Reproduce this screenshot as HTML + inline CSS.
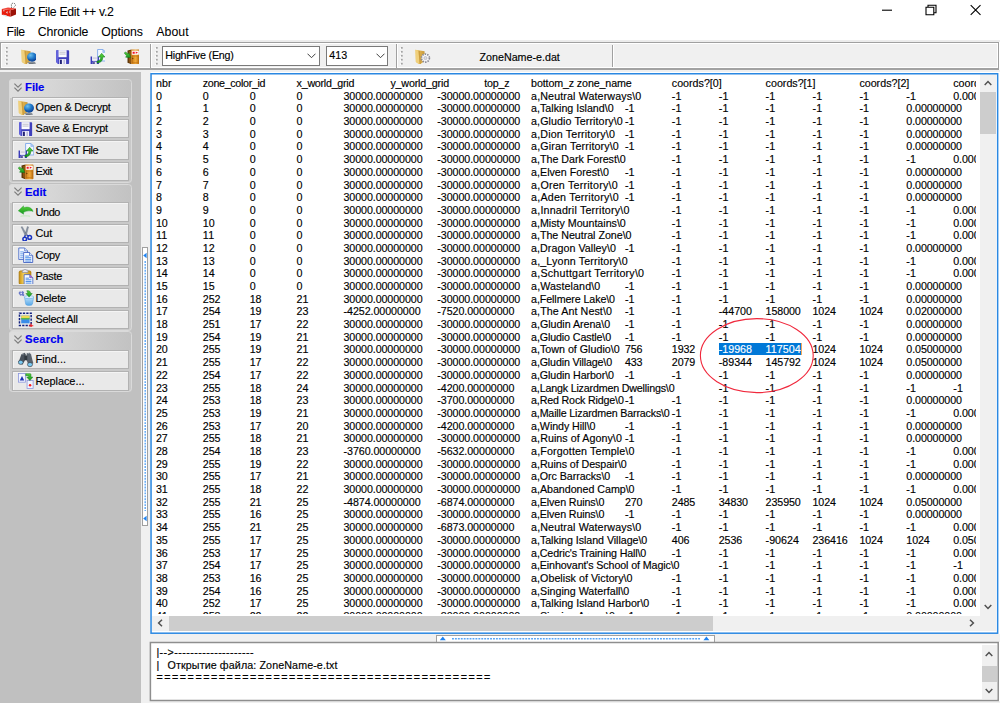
<!DOCTYPE html>
<html lang="en"><head><meta charset="utf-8"><title>L2 File Edit ++ v.2</title>
<style>
*{box-sizing:border-box;margin:0;padding:0}
html,body{width:1000px;height:703px;overflow:hidden;background:#fff}
body{position:relative;font-family:"Liberation Sans","DejaVu Sans",sans-serif;font-size:10.7px;color:#000;-webkit-text-stroke-width:.15px}
div,span,i,b,svg{position:absolute}
i{font-style:normal;white-space:pre;top:0}
/* title + menu */
#title{-webkit-text-stroke-width:.050px;left:21.900px;top:1.900px;font-size:12.300px;line-height:20px;white-space:pre}
.m{-webkit-text-stroke-width:.050px;top:22px;font-size:12.300px;line-height:20px;white-space:pre}
/* toolbar */
#tb{left:0;top:42px;width:998.6px;height:28.200px;background:#f0f0f0;border-top:1px solid #a0a0a0;border-left:1px solid #a0a0a0;border-bottom:2px solid #a2a2a2;border-right:1px solid #a0a0a0;box-shadow:inset 1px 1px 0 #fff,inset -1px -1px 0 #fff}
#tbtop{left:0;top:40px;width:1000px;height:2px;background:#ececec}
#under{left:0;top:70px;width:1000px;height:2px;background:#f0f0f0}
.sep{top:44px;width:2px;height:23.500px;border-left:1px solid #a0a0a0;border-right:1px solid #fff}
.combo{top:46.300px;height:19.500px;background:#fff;border:1px solid #7a7a7a;line-height:17.600px;padding-left:2.100px;font-size:10.700px;white-space:pre}
.combo svg{top:6px;width:9px;height:6px}
.ti{top:48.500px;width:15.600px;height:15.600px}
/* sidebar */
#side{left:0;top:71.800px;width:140.600px;height:632px;background:#c0c0c0}
#strip{left:140.600px;top:71.800px;width:10px;height:632px;background:#f0f0f0}
.p{left:9.100px;width:122.800px;background:#c9c9c9;border-radius:3.500px;overflow:hidden}
.p::after{content:"";position:absolute;left:0;top:0;right:0;bottom:0;border:1px solid #dadada;border-radius:3.500px}
.ph{left:0;top:0;width:100%;height:19px;background:linear-gradient(90deg,#dedede 0,#d6d6d6 35%,#c2c2c2 100%)}
.ph b{left:16px;top:1px;font-size:11.300px;line-height:14px;color:#0000f0;font-weight:bold}
.cv{left:4.800px;top:3.600px;width:8px;height:9.200px}
.b{left:2.900px;width:117.300px;height:19.500px;background:#e9e9e9;border:1px solid #b2b2b2;box-shadow:inset 1px 1px 0 #f4f4f4}
.b span{left:22.600px;top:1.700px;line-height:14px;white-space:pre;font-size:10.900px}
.ic{left:5.100px;top:1.300px;width:15.600px;height:15.600px}
/* text area */
#ta{left:151px;top:73.700px;width:846.600px;height:559.500px;background:#fff}
#tc{left:152px;top:74.500px;width:824px;height:539.800px;overflow:hidden;line-height:12.690px}
.r{left:0;width:900px;height:12.690px}
#sel{left:566.800px;width:82px;height:12.600px;background:#0078d7}
.sb{background:#f0f0f0}
.th{background:#cdcdcd}
.ar{width:8px;height:8px}
#log{left:150.400px;top:642.500px;width:847.800px;height:58px;background:#fff}
#lt{left:156.400px;top:646px;line-height:12.900px;white-space:pre}
#lt i{position:absolute}
#bot{left:140.600px;top:700.800px;width:860px;height:3px;background:#f0f0f0}
.hd{background:#fff;border:1px solid #a0a0a0}
</style></head><body>

<svg width="0" height="0" style="position:absolute"><defs>
<radialGradient id="gb" cx=".35" cy=".3" r=".8"><stop offset="0" stop-color="#6cc0ee"/><stop offset=".5" stop-color="#2078c8"/><stop offset="1" stop-color="#0c3c96"/></radialGradient>
<linearGradient id="gf" x1="0" x2="1"><stop offset="0" stop-color="#ecc868"/><stop offset=".45" stop-color="#e0b452"/><stop offset="1" stop-color="#c89838"/></linearGradient>
<linearGradient id="gd" x1="0" x2="1"><stop offset="0" stop-color="#c87814"/><stop offset=".55" stop-color="#f0aa3c"/><stop offset="1" stop-color="#b86a0c"/></linearGradient>
<linearGradient id="gg" x1="0" y1="0" x2="0" y2="1"><stop offset="0" stop-color="#5ad23c"/><stop offset="1" stop-color="#14961e"/></linearGradient>
<linearGradient id="gp" x1="0" x2="1"><stop offset="0" stop-color="#c8920c"/><stop offset=".4" stop-color="#f6d264"/><stop offset="1" stop-color="#c8920c"/></linearGradient>
<linearGradient id="gl" x1="0" y1="0" x2="0" y2="1"><stop offset="0" stop-color="#bfe2fa"/><stop offset="1" stop-color="#58a8e8"/></linearGradient>
</defs></svg>
<svg style="left:0;top:0;width:20px;height:20px" viewBox="0 0 20 20"><path d="M1.800 9l8.700 1.200v6.500l-8.700-1.900z" fill="#e81c0c"/><path d="M10.500 10.200l5.500-1.600v6l-5.500 2.100z" fill="#9c1208"/><path d="M1.800 9l6.200-1.400 8 1-5.500 1.600z" fill="#f2463a"/><path d="M3 10.200h1.600v1h-1.600zM9 11.600h1.300v1h-1.300zM7.600 11l-1.800 1.400 1.800 1.400z" fill="#e4c4c4"/><path d="M2.400 14.500l3.600 .8 3 1.800-3.600-.4z" fill="#dcecf0"/><path d="M11.500 8c.5-2-1-3.500.5-4.500s3 0 3.500 1.200-1.500 1.500-2 3.300" fill="none" stroke="#666" stroke-width=".9" stroke-dasharray="1.300 .9"/></svg>
<div id="title" style="letter-spacing:-0.35px">L2 File Edit ++ v.2</div>
<div class="m" style="left:6.6px;letter-spacing:-0.45px">File</div>
<div class="m" style="left:37.8px;letter-spacing:-0.16px">Chronicle</div>
<div class="m" style="left:101.3px;letter-spacing:-0.14px">Options</div>
<div class="m" style="left:156.3px;letter-spacing:0.05px">About</div>
<svg style="left:876px;top:0;width:112px;height:20px" viewBox="0 0 112 20"><path d="M6 10.200h10" stroke="#000" stroke-width="1.100"/><path d="M50 7.200h7.800v7.500h-7.800zM52 7.200v-2h8v7.500h-2.200" fill="none" stroke="#000" stroke-width="1.100"/><path d="M94.700 5.200l9.800 9.600M104.500 5.200l-9.800 9.600" stroke="#000" stroke-width="1.100"/></svg>
<div id="tbtop"></div><div id="tb"></div><div id="under"></div>
<svg style="left:4.9px;top:46.800px;width:3px;height:18px" viewBox="0 0 3 18"><rect x=".1" y="0.90" width="1.500" height="1.500" fill="#fff"/><rect x="1" y="0.00" width="1.700" height="1.700" fill="#a2a2a2"/><rect x=".1" y="4.86" width="1.500" height="1.500" fill="#fff"/><rect x="1" y="3.96" width="1.700" height="1.700" fill="#a2a2a2"/><rect x=".1" y="8.82" width="1.500" height="1.500" fill="#fff"/><rect x="1" y="7.92" width="1.700" height="1.700" fill="#a2a2a2"/><rect x=".1" y="12.78" width="1.500" height="1.500" fill="#fff"/><rect x="1" y="11.88" width="1.700" height="1.700" fill="#a2a2a2"/><rect x=".1" y="16.74" width="1.500" height="1.500" fill="#fff"/><rect x="1" y="15.84" width="1.700" height="1.700" fill="#a2a2a2"/></svg>
<svg class="ti" style="left:20.9px" viewBox="0 0 16 16"><path d="M.4 .8l9.400 1.400v10l-5 3.800-3.900-2.700z" fill="url(#gf)"/><path d="M.4 .8l3.200 .9 1.200 14.300-3.900-2.700z" fill="#f0d07c"/><path d="M3.600 1.700l1.200 14.300 1.400-1-1.100-13z" fill="#cc9e40"/><path d="M6.400 13.400l2 2 5.600.500 1.400-1.300-1.600-1.800z" fill="#8a9098"/><path d="M8 15.200h4.200l1.600 1" stroke="#586068" stroke-width=".8" fill="none"/><ellipse cx="11.300" cy="8.300" rx="5.100" ry="4.700" fill="url(#gb)"/><path d="M7.200 10.300c2.500 1.500 6 1.500 8.300 0" stroke="#0c3484" stroke-width=".7" fill="none" opacity=".6"/></svg>
<svg class="ti" style="left:55.3px" viewBox="0 0 16 16"><path d="M2 1.200h11.600q.9 0 .9.900v12.400q0 .9-.9.900h-10.400l-2.100-2.100v-11.200q0-.9.900-.9z" fill="#4040bc"/><path d="M2 1.200h1.400v14.200h-.2l-2.100-2.100v-11.200q0-.9.900-.9z" fill="#6464dc"/><rect x="3.600" y="1.200" width="8.300" height="7.200" fill="#fcfcff"/><path d="M4.600 3.300h6.300M4.600 5.200h6.300" stroke="#b4b4c4" stroke-width=".9"/><rect x="4.400" y="10.300" width="7" height="5.100" fill="#f0f0fc"/><rect x="5.200" y="11" width="1.800" height="4.400" fill="#14146c"/><rect x="8.800" y="11" width="1.200" height="4.400" fill="#a8a8d0"/></svg>
<svg class="ti" style="left:89.8px" viewBox="0 0 16 16"><path d="M7.800 .5h5.400l3 3v8.800h-8.400z" fill="#f4f8ff" stroke="#7aa6ea" stroke-width=".9"/><path d="M13.200 .5v3h3z" fill="#b8d2f6" stroke="#7aa6ea" stroke-width=".6"/><path d="M.6 7.600h1.600v8.600h-.4l-1.200-1.200zM7.600 7.600h1.600v8.600h-1.600zM.6 12h8.600v4.200h-8l-.6-.6z" fill="#3a3ab8"/><rect x="2.200" y="7.600" width="5.400" height="4.400" fill="#eeeef8"/><path d="M2.800 9.300h4.200" stroke="#b4b4c4" stroke-width=".8"/><rect x="2.800" y="13" width="4.200" height="3.200" fill="#e4e4f6"/><rect x="3.400" y="13.400" width="1.300" height="2.800" fill="#14146c"/><path d="M12 4.400l3.400 3.900h-2.200c0 3.700-2.300 6.100-6 6.100v-2c2.400 0 3.800-1.500 3.800-4.100h-2.300z" fill="url(#gg)" stroke="#0c7416" stroke-width=".5"/></svg>
<svg class="ti" style="left:123.8px" viewBox="0 0 16 16"><path d="M3.600 1.500l4-1.100v15.200l-4-1.600z" fill="#5e3608"/><path d="M5 2.300l2.600-.8v13.200l-2.600-1z" fill="#8c5210"/><rect x="7.400" y=".4" width="8.400" height="15.200" rx=".7" fill="url(#gd)"/><rect x="8.600" y="7.200" width="6" height="7" fill="none" stroke="#b86c10" stroke-width=".6"/><rect x="8" y="1.700" width="7.200" height="4.200" fill="#fff"/><path d="M8.800 2.700h2.200v2.200h-2.200zM12 2.600l2.400 1.200-2.400 1.200z" fill="#f01424"/><circle cx="9" cy="9.800" r=".7" fill="#6a3c06"/><path d="M.2 4l1.600-1 2.300 2.300 1-1.500 1.700 5-5.200-.4 1.100-1.400z" fill="url(#gg)" stroke="#0c7416" stroke-width=".5"/></svg>
<div class="sep" style="left:150.200px"></div>
<svg style="left:154.6px;top:46.800px;width:3px;height:18px" viewBox="0 0 3 18"><rect x=".1" y="0.90" width="1.500" height="1.500" fill="#fff"/><rect x="1" y="0.00" width="1.700" height="1.700" fill="#a2a2a2"/><rect x=".1" y="4.86" width="1.500" height="1.500" fill="#fff"/><rect x="1" y="3.96" width="1.700" height="1.700" fill="#a2a2a2"/><rect x=".1" y="8.82" width="1.500" height="1.500" fill="#fff"/><rect x="1" y="7.92" width="1.700" height="1.700" fill="#a2a2a2"/><rect x=".1" y="12.78" width="1.500" height="1.500" fill="#fff"/><rect x="1" y="11.88" width="1.700" height="1.700" fill="#a2a2a2"/><rect x=".1" y="16.74" width="1.500" height="1.500" fill="#fff"/><rect x="1" y="15.84" width="1.700" height="1.700" fill="#a2a2a2"/></svg>
<div class="combo" style="left:162.100px;width:157.800px;letter-spacing:-0.20px">HighFive (Eng)<svg viewBox="0 0 9 6" style="left:143.5px"><path d="M.5 .7l4 4 4-4" fill="none" stroke="#404040" stroke-width="1"/></svg></div>
<div class="combo" style="left:326.200px;width:62.100px">413<svg viewBox="0 0 9 6" style="left:48.5px"><path d="M.5 .7l4 4 4-4" fill="none" stroke="#404040" stroke-width="1"/></svg></div>
<div class="sep" style="left:396px"></div>
<svg style="left:399.7px;top:46.800px;width:3px;height:18px" viewBox="0 0 3 18"><rect x=".1" y="0.90" width="1.500" height="1.500" fill="#fff"/><rect x="1" y="0.00" width="1.700" height="1.700" fill="#a2a2a2"/><rect x=".1" y="4.86" width="1.500" height="1.500" fill="#fff"/><rect x="1" y="3.96" width="1.700" height="1.700" fill="#a2a2a2"/><rect x=".1" y="8.82" width="1.500" height="1.500" fill="#fff"/><rect x="1" y="7.92" width="1.700" height="1.700" fill="#a2a2a2"/><rect x=".1" y="12.78" width="1.500" height="1.500" fill="#fff"/><rect x="1" y="11.88" width="1.700" height="1.700" fill="#a2a2a2"/><rect x=".1" y="16.74" width="1.500" height="1.500" fill="#fff"/><rect x="1" y="15.84" width="1.700" height="1.700" fill="#a2a2a2"/></svg>
<svg class="ti" style="left:415.3px" viewBox="0 0 16 16"><path d="M.4 .8l9.400 1.400v10l-5 3.800-3.900-2.700z" fill="url(#gf)"/><path d="M.4 .8l3.200 .9 1.200 14.300-3.900-2.700z" fill="#f0d07c"/><path d="M3.600 1.700l1.200 14.300 1.400-1-1.100-13z" fill="#cc9e40"/><circle cx="10.700" cy="9.300" r="4.100" fill="#f6f6f8" stroke="#8a8a94" stroke-width="1.700" stroke-dasharray="1.500 1.080"/><circle cx="10.700" cy="9.300" r="1.600" fill="#dcdce2" stroke="#9a9aa4" stroke-width=".500"/></svg>
<div style="left:479.600px;top:49.500px;line-height:14px;white-space:pre;font-size:10.700px;letter-spacing:0.00px">ZoneName-e.dat</div>
<div class="sep" style="left:611.500px;top:45px;height:22px"></div>
<div id="side"></div><div id="strip"></div>
<div class="p" style="top:79.0px;height:104.2px"><div class="ph"><svg class="cv" viewBox="0 0 8 9"><path d="M.4 .6l3.600 3.500 3.600-3.500M.4 4.600l3.600 3.500 3.600-3.500" fill="none" stroke="#7c7c7c" stroke-width="1.150"/></svg><b style="letter-spacing:-0.07px">File</b></div><div class="b" style="top:18.4px"><svg class="ic" viewBox="0 0 16 16"><path d="M.4 .8l9.400 1.400v10l-5 3.800-3.900-2.700z" fill="url(#gf)"/><path d="M.4 .8l3.200 .9 1.200 14.300-3.900-2.700z" fill="#f0d07c"/><path d="M3.600 1.700l1.200 14.300 1.400-1-1.100-13z" fill="#cc9e40"/><path d="M6.400 13.400l2 2 5.600.500 1.400-1.300-1.600-1.800z" fill="#8a9098"/><path d="M8 15.200h4.200l1.600 1" stroke="#586068" stroke-width=".8" fill="none"/><ellipse cx="11.300" cy="8.300" rx="5.100" ry="4.700" fill="url(#gb)"/><path d="M7.200 10.300c2.500 1.500 6 1.500 8.300 0" stroke="#0c3484" stroke-width=".7" fill="none" opacity=".6"/></svg><span style="letter-spacing:-0.17px">Open &amp; Decrypt</span></div><div class="b" style="top:39.8px"><svg class="ic" viewBox="0 0 16 16"><path d="M2 1.200h11.600q.9 0 .9.900v12.400q0 .9-.9.900h-10.400l-2.100-2.100v-11.200q0-.9.900-.9z" fill="#4040bc"/><path d="M2 1.200h1.400v14.200h-.2l-2.100-2.100v-11.200q0-.9.900-.9z" fill="#6464dc"/><rect x="3.600" y="1.200" width="8.300" height="7.200" fill="#fcfcff"/><path d="M4.600 3.300h6.300M4.600 5.200h6.300" stroke="#b4b4c4" stroke-width=".9"/><rect x="4.400" y="10.300" width="7" height="5.100" fill="#f0f0fc"/><rect x="5.200" y="11" width="1.800" height="4.400" fill="#14146c"/><rect x="8.800" y="11" width="1.200" height="4.400" fill="#a8a8d0"/></svg><span style="letter-spacing:-0.20px">Save &amp; Encrypt</span></div><div class="b" style="top:61.3px"><svg class="ic" viewBox="0 0 16 16"><path d="M7.800 .5h5.400l3 3v8.800h-8.400z" fill="#f4f8ff" stroke="#7aa6ea" stroke-width=".9"/><path d="M13.200 .5v3h3z" fill="#b8d2f6" stroke="#7aa6ea" stroke-width=".6"/><path d="M.6 7.600h1.600v8.600h-.4l-1.200-1.200zM7.600 7.600h1.600v8.600h-1.600zM.6 12h8.600v4.200h-8l-.6-.6z" fill="#3a3ab8"/><rect x="2.200" y="7.600" width="5.400" height="4.400" fill="#eeeef8"/><path d="M2.800 9.300h4.200" stroke="#b4b4c4" stroke-width=".8"/><rect x="2.800" y="13" width="4.200" height="3.200" fill="#e4e4f6"/><rect x="3.400" y="13.400" width="1.300" height="2.800" fill="#14146c"/><path d="M12 4.400l3.400 3.900h-2.200c0 3.700-2.300 6.100-6 6.100v-2c2.400 0 3.800-1.500 3.800-4.100h-2.300z" fill="url(#gg)" stroke="#0c7416" stroke-width=".5"/></svg><span style="letter-spacing:-0.47px">Save TXT File</span></div><div class="b" style="top:82.8px"><svg class="ic" viewBox="0 0 16 16"><path d="M3.600 1.500l4-1.100v15.200l-4-1.600z" fill="#5e3608"/><path d="M5 2.300l2.600-.8v13.200l-2.600-1z" fill="#8c5210"/><rect x="7.400" y=".4" width="8.400" height="15.200" rx=".7" fill="url(#gd)"/><rect x="8.600" y="7.200" width="6" height="7" fill="none" stroke="#b86c10" stroke-width=".6"/><rect x="8" y="1.700" width="7.200" height="4.200" fill="#fff"/><path d="M8.800 2.700h2.200v2.200h-2.200zM12 2.600l2.400 1.200-2.400 1.200z" fill="#f01424"/><circle cx="9" cy="9.800" r=".7" fill="#6a3c06"/><path d="M.2 4l1.600-1 2.300 2.300 1-1.500 1.700 5-5.200-.4 1.100-1.400z" fill="url(#gg)" stroke="#0c7416" stroke-width=".5"/></svg><span style="letter-spacing:-0.39px">Exit</span></div></div><div class="p" style="top:183.8px;height:147.0px"><div class="ph"><svg class="cv" viewBox="0 0 8 9"><path d="M.4 .6l3.600 3.500 3.600-3.500M.4 4.600l3.600 3.500 3.600-3.500" fill="none" stroke="#7c7c7c" stroke-width="1.150"/></svg><b style="letter-spacing:-0.06px">Edit</b></div><div class="b" style="top:18.4px"><svg class="ic" viewBox="0 0 16 16"><path d="M.3 7l5.400-5.100v2c3.300-1.500 8.300-.9 9.800 3.700-2.500-1-6.500-.6-9.800.9v2z" fill="url(#gg)" stroke="#1a9a24" stroke-width=".4"/><path d="M2.500 12.600c3-.6 7-.6 10 0" stroke="#b4e6ac" stroke-width="1" fill="none" opacity=".8"/></svg><span style="letter-spacing:-0.41px">Undo</span></div><div class="b" style="top:39.8px"><svg class="ic" viewBox="0 0 16 16"><path d="M3.200 1l1.200-.3 4.600 8.400-1.200 1.300zM9.600 .6l1.200.4-2.400 9.300-1.500-.8z" fill="#8e98a8" stroke="#5e6878" stroke-width=".4"/><circle cx="6.900" cy="13.400" r="1.900" fill="none" stroke="#1a34c0" stroke-width="1.500"/><circle cx="12" cy="11.700" r="1.900" fill="none" stroke="#1a34c0" stroke-width="1.500"/><path d="M7.400 9.500l-.8 2.200M9.300 9.300l1.600 1" stroke="#1a34c0" stroke-width="1.300"/></svg><span style="letter-spacing:-0.12px">Cut</span></div><div class="b" style="top:61.3px"><svg class="ic" viewBox="0 0 16 16"><path d="M.8 1h6l3 3v8.800h-9z" fill="#f4f8ff" stroke="#4a6cc8" stroke-width=".9"/><path d="M6.800 1v3h3" fill="#d4e2fa" stroke="#4a6cc8" stroke-width=".7"/><path d="M2.300 5h3.500M2.300 7h3M2.300 9h3M2.300 11h3" stroke="#5a96e8" stroke-width=".9"/><path d="M5.800 5.600h6l3.300 3.300v7h-9.300z" fill="#f8fbff" stroke="#3a5cc0" stroke-width=".9"/><path d="M11.800 5.600v3.300h3.300" fill="#d4e2fa" stroke="#3a5cc0" stroke-width=".7"/><path d="M7.400 9.300h3.800M7.400 11h6.200M7.400 12.700h6.200M7.400 14.400h6.200" stroke="#4a8ce8" stroke-width="1"/></svg><span style="letter-spacing:-0.26px">Copy</span></div><div class="b" style="top:82.8px"><svg class="ic" viewBox="0 0 16 16"><rect x="1.200" y="2" width="12" height="13.700" rx="1.300" fill="url(#gp)" stroke="#a87408" stroke-width=".8"/><path d="M4.400 3.600v-1.800q0-.6.600-.6h1l.5-.9h1.600l.5.900h1q.6 0 .6.600v1.800z" fill="#e4e4ec" stroke="#80808c" stroke-width=".6"/><path d="M6.300 5.800h5.700l3.200 3.200v7h-8.900z" fill="#f8fbff" stroke="#3a5cc0" stroke-width=".8"/><path d="M12 5.800v3.200h3.200" fill="#c060d0" stroke="#3a5cc0" stroke-width=".6"/><path d="M7.800 9.400h3.400M7.800 11.100h6M7.800 12.800h6M7.800 14.500h6" stroke="#4a8ce8" stroke-width="1"/></svg><span style="letter-spacing:-0.30px">Paste</span></div><div class="b" style="top:104.3px"><svg class="ic" viewBox="0 0 16 16"><path d="M6.600 7.200h9.500l-1.300 7.300q-.3 1.300-3.500 1.300t-3.400-1.300z" fill="url(#gl)" stroke="#4c9ce0" stroke-width=".5"/><ellipse cx="11.300" cy="7.300" rx="4.800" ry="1.600" fill="#d8eefc" stroke="#4c9ce0" stroke-width=".5"/><path d="M9 .8c2.400-.6 4 .6 3.900 2.800h1.700l-3.200 3.700-3.300-3.700h1.900c.1-1-.3-1.600-1-2.800z" fill="url(#gg)" stroke="#0f7a18" stroke-width=".5"/><path d="M.5 3l1.400-1.800 1.500.9 1.300-1 1.500 1.200-.6 1.800 1.200 1-1.200 1.200-1.800-.9-1.500.6z" fill="#6878c8"/><circle cx="3.300" cy="3.400" r=".9" fill="#dfe4fa"/></svg><span style="letter-spacing:-0.21px">Delete</span></div><div class="b" style="top:125.8px"><svg class="ic" viewBox="0 0 16 16"><rect x="1.500" y="1.200" width="12" height="12.600" fill="none" stroke="#102080" stroke-width="1.500" stroke-dasharray="2.300 1.200"/><rect x="3.300" y="3.600" width="8.600" height="8" fill="#3a8ce8"/><rect x="3.300" y="3.600" width="8.600" height="2.700" fill="#f2dc50"/><rect x="3.300" y="6.100" width="8.600" height="1.500" fill="#58b848"/><path d="M13.400 11.800v4.600M11.100 14.100h4.600" stroke="#f82020" stroke-width="1.200"/></svg><span style="letter-spacing:-0.28px">Select All</span></div></div><div class="p" style="top:331.3px;height:60.6px"><div class="ph"><svg class="cv" viewBox="0 0 8 9"><path d="M.4 .6l3.600 3.500 3.600-3.500M.4 4.600l3.600 3.500 3.600-3.500" fill="none" stroke="#7c7c7c" stroke-width="1.150"/></svg><b style="letter-spacing:0.15px">Search</b></div><div class="b" style="top:18.4px"><svg class="ic" viewBox="0 0 16 16"><path d="M3.500 2.400l3.200-1.600 1.300 1.600-.5 5.600-3 5-4-2.500z" fill="#4a525c"/><path d="M9 1.200l3-.4 1.400 1.800 2.300 9-4.700 2.200-2.500-6z" fill="#59626c"/><path d="M6.500 3.500h3v5h-3z" fill="#30383f"/><path d="M4.500 2.600l1.500-.7M10 1.600l1.800-.2" stroke="#aab2ba" stroke-width=".7"/><ellipse cx="2.800" cy="10.600" rx="2.500" ry="2.100" fill="#7ccaf2" stroke="#3a424a" stroke-width=".7"/><ellipse cx="12.300" cy="12.900" rx="2.600" ry="2.200" fill="#7ccaf2" stroke="#3a424a" stroke-width=".7"/></svg><span style="letter-spacing:0.02px">Find...</span></div><div class="b" style="top:39.8px"><svg class="ic" viewBox="0 0 16 16"><rect x=".5" y=".6" width="7.200" height="8.800" fill="#f2f5ff" stroke="#8a94dc" stroke-width=".8"/><path d="M1.800 7.600l2.300-4.600 2.300 4.600z" fill="#1a30b0"/><rect x="9.300" y="7.800" width="6.200" height="8" fill="#f2f5ff" stroke="#8a94dc" stroke-width=".8"/><circle cx="12.400" cy="12.600" r="1.300" fill="#f82020"/><path d="M8 .7h4.500q.8 0 .8.800v2.700h1.900l-3 3.600-3.200-3.600h2v-1.500h-3z" fill="url(#gg)" stroke="#0f7a18" stroke-width=".5"/></svg><span style="letter-spacing:-0.02px">Replace...</span></div></div>
<div class="hd" style="left:142px;top:247px;width:6.400px;height:278.600px"></div>
<svg style="left:143.200px;top:252px;width:4px;height:270px" viewBox="0 0 4 270"><path d="M3.600 .8v5.400l-3.400-2.700zM3.600 263.800v5.400l-3.400-2.700z" fill="#1e82f0"/><path d="M2.200 9v250" stroke="#5aa5f5" stroke-width="1.400" stroke-dasharray="1.900 1.030"/></svg>
<div id="ta"></div>
<div id="tc"><div id="sel" style="top:268.19px"></div><div style="left:648.800px;top:268.19px;width:1px;height:12.600px;background:#f0a85a"></div>
<div class="r" style="top:2.50px"><i style="left:3.9px;letter-spacing:0.05px">nbr</i><i style="left:50.8px;letter-spacing:-0.32px">zone_color_id</i><i style="left:144.6px;letter-spacing:-0.25px">x_world_grid</i><i style="left:238.4px;letter-spacing:-0.17px">y_world_grid</i><i style="left:332.2px;letter-spacing:-0.16px">top_z</i><i style="left:379.1px;letter-spacing:-0.13px">bottom_z zone_name</i><i style="left:519.8px">coords?[0]</i><i style="left:613.6px">coords?[1]</i><i style="left:707.4px">coords?[2]</i><i style="left:801.2px">coords?[3]</i></div>
<div class="r" style="top:15.19px"><i style="left:3.9px;letter-spacing:-0.09px">0</i><i style="left:50.8px;letter-spacing:-0.09px">0</i><i style="left:97.7px;letter-spacing:-0.09px">0</i><i style="left:144.6px;letter-spacing:-0.09px">0</i><i style="left:191.5px;letter-spacing:-0.09px">30000.00000000</i><i style="left:285.3px;letter-spacing:-0.06px">-30000.00000000</i><i style="left:379.1px;letter-spacing:0.12px">a,Neutral Waterways\0</i><i style="left:519.8px;letter-spacing:0.13px">-1</i><i style="left:566.7px;letter-spacing:0.13px">-1</i><i style="left:613.6px;letter-spacing:0.13px">-1</i><i style="left:660.5px;letter-spacing:0.13px">-1</i><i style="left:707.4px;letter-spacing:0.13px">-1</i><i style="left:754.3px;letter-spacing:0.13px">-1</i><i style="left:801.2px;letter-spacing:-0.09px">0.00000000</i></div>
<div class="r" style="top:27.88px"><i style="left:3.9px;letter-spacing:-0.09px">1</i><i style="left:50.8px;letter-spacing:-0.09px">1</i><i style="left:97.7px;letter-spacing:-0.09px">0</i><i style="left:144.6px;letter-spacing:-0.09px">0</i><i style="left:191.5px;letter-spacing:-0.09px">30000.00000000</i><i style="left:285.3px;letter-spacing:-0.06px">-30000.00000000</i><i style="left:379.1px">a,Talking Island\0</i><i style="left:472.9px;letter-spacing:0.13px">-1</i><i style="left:519.8px;letter-spacing:0.13px">-1</i><i style="left:566.7px;letter-spacing:0.13px">-1</i><i style="left:613.6px;letter-spacing:0.13px">-1</i><i style="left:660.5px;letter-spacing:0.13px">-1</i><i style="left:707.4px;letter-spacing:0.13px">-1</i><i style="left:754.3px;letter-spacing:-0.09px">0.00000000</i></div>
<div class="r" style="top:40.57px"><i style="left:3.9px;letter-spacing:-0.09px">2</i><i style="left:50.8px;letter-spacing:-0.09px">2</i><i style="left:97.7px;letter-spacing:-0.09px">0</i><i style="left:144.6px;letter-spacing:-0.09px">0</i><i style="left:191.5px;letter-spacing:-0.09px">30000.00000000</i><i style="left:285.3px;letter-spacing:-0.06px">-30000.00000000</i><i style="left:379.1px;letter-spacing:0.08px">a,Gludio Territory\0</i><i style="left:472.9px;letter-spacing:0.13px">-1</i><i style="left:519.8px;letter-spacing:0.13px">-1</i><i style="left:566.7px;letter-spacing:0.13px">-1</i><i style="left:613.6px;letter-spacing:0.13px">-1</i><i style="left:660.5px;letter-spacing:0.13px">-1</i><i style="left:707.4px;letter-spacing:0.13px">-1</i><i style="left:754.3px;letter-spacing:-0.09px">0.00000000</i></div>
<div class="r" style="top:53.26px"><i style="left:3.9px;letter-spacing:-0.09px">3</i><i style="left:50.8px;letter-spacing:-0.09px">3</i><i style="left:97.7px;letter-spacing:-0.09px">0</i><i style="left:144.6px;letter-spacing:-0.09px">0</i><i style="left:191.5px;letter-spacing:-0.09px">30000.00000000</i><i style="left:285.3px;letter-spacing:-0.06px">-30000.00000000</i><i style="left:379.1px;letter-spacing:0.15px">a,Dion Territory\0</i><i style="left:472.9px;letter-spacing:0.13px">-1</i><i style="left:519.8px;letter-spacing:0.13px">-1</i><i style="left:566.7px;letter-spacing:0.13px">-1</i><i style="left:613.6px;letter-spacing:0.13px">-1</i><i style="left:660.5px;letter-spacing:0.13px">-1</i><i style="left:707.4px;letter-spacing:0.13px">-1</i><i style="left:754.3px;letter-spacing:-0.09px">0.00000000</i></div>
<div class="r" style="top:65.95px"><i style="left:3.9px;letter-spacing:-0.09px">4</i><i style="left:50.8px;letter-spacing:-0.09px">4</i><i style="left:97.7px;letter-spacing:-0.09px">0</i><i style="left:144.6px;letter-spacing:-0.09px">0</i><i style="left:191.5px;letter-spacing:-0.09px">30000.00000000</i><i style="left:285.3px;letter-spacing:-0.06px">-30000.00000000</i><i style="left:379.1px;letter-spacing:0.13px">a,Giran Territory\0</i><i style="left:472.9px;letter-spacing:0.13px">-1</i><i style="left:519.8px;letter-spacing:0.13px">-1</i><i style="left:566.7px;letter-spacing:0.13px">-1</i><i style="left:613.6px;letter-spacing:0.13px">-1</i><i style="left:660.5px;letter-spacing:0.13px">-1</i><i style="left:707.4px;letter-spacing:0.13px">-1</i><i style="left:754.3px;letter-spacing:-0.09px">0.00000000</i></div>
<div class="r" style="top:78.64px"><i style="left:3.9px;letter-spacing:-0.09px">5</i><i style="left:50.8px;letter-spacing:-0.09px">5</i><i style="left:97.7px;letter-spacing:-0.09px">0</i><i style="left:144.6px;letter-spacing:-0.09px">0</i><i style="left:191.5px;letter-spacing:-0.09px">30000.00000000</i><i style="left:285.3px;letter-spacing:-0.06px">-30000.00000000</i><i style="left:379.1px;letter-spacing:-0.02px">a,The Dark Forest\0</i><i style="left:519.8px;letter-spacing:0.13px">-1</i><i style="left:566.7px;letter-spacing:0.13px">-1</i><i style="left:613.6px;letter-spacing:0.13px">-1</i><i style="left:660.5px;letter-spacing:0.13px">-1</i><i style="left:707.4px;letter-spacing:0.13px">-1</i><i style="left:754.3px;letter-spacing:0.13px">-1</i><i style="left:801.2px;letter-spacing:-0.09px">0.00000000</i></div>
<div class="r" style="top:91.33px"><i style="left:3.9px;letter-spacing:-0.09px">6</i><i style="left:50.8px;letter-spacing:-0.09px">6</i><i style="left:97.7px;letter-spacing:-0.09px">0</i><i style="left:144.6px;letter-spacing:-0.09px">0</i><i style="left:191.5px;letter-spacing:-0.09px">30000.00000000</i><i style="left:285.3px;letter-spacing:-0.06px">-30000.00000000</i><i style="left:379.1px">a,Elven Forest\0</i><i style="left:472.9px;letter-spacing:0.13px">-1</i><i style="left:519.8px;letter-spacing:0.13px">-1</i><i style="left:566.7px;letter-spacing:0.13px">-1</i><i style="left:613.6px;letter-spacing:0.13px">-1</i><i style="left:660.5px;letter-spacing:0.13px">-1</i><i style="left:707.4px;letter-spacing:0.13px">-1</i><i style="left:754.3px;letter-spacing:-0.09px">0.00000000</i></div>
<div class="r" style="top:104.02px"><i style="left:3.9px;letter-spacing:-0.09px">7</i><i style="left:50.8px;letter-spacing:-0.09px">7</i><i style="left:97.7px;letter-spacing:-0.09px">0</i><i style="left:144.6px;letter-spacing:-0.09px">0</i><i style="left:191.5px;letter-spacing:-0.09px">30000.00000000</i><i style="left:285.3px;letter-spacing:-0.06px">-30000.00000000</i><i style="left:379.1px;letter-spacing:0.21px">a,Oren Territory\0</i><i style="left:472.9px;letter-spacing:0.13px">-1</i><i style="left:519.8px;letter-spacing:0.13px">-1</i><i style="left:566.7px;letter-spacing:0.13px">-1</i><i style="left:613.6px;letter-spacing:0.13px">-1</i><i style="left:660.5px;letter-spacing:0.13px">-1</i><i style="left:707.4px;letter-spacing:0.13px">-1</i><i style="left:754.3px;letter-spacing:-0.09px">0.00000000</i></div>
<div class="r" style="top:116.71px"><i style="left:3.9px;letter-spacing:-0.09px">8</i><i style="left:50.8px;letter-spacing:-0.09px">8</i><i style="left:97.7px;letter-spacing:-0.09px">0</i><i style="left:144.6px;letter-spacing:-0.09px">0</i><i style="left:191.5px;letter-spacing:-0.09px">30000.00000000</i><i style="left:285.3px;letter-spacing:-0.06px">-30000.00000000</i><i style="left:379.1px;letter-spacing:0.20px">a,Aden Territory\0</i><i style="left:472.9px;letter-spacing:0.13px">-1</i><i style="left:519.8px;letter-spacing:0.13px">-1</i><i style="left:566.7px;letter-spacing:0.13px">-1</i><i style="left:613.6px;letter-spacing:0.13px">-1</i><i style="left:660.5px;letter-spacing:0.13px">-1</i><i style="left:707.4px;letter-spacing:0.13px">-1</i><i style="left:754.3px;letter-spacing:-0.09px">0.00000000</i></div>
<div class="r" style="top:129.40px"><i style="left:3.9px;letter-spacing:-0.09px">9</i><i style="left:50.8px;letter-spacing:-0.09px">9</i><i style="left:97.7px;letter-spacing:-0.09px">0</i><i style="left:144.6px;letter-spacing:-0.09px">0</i><i style="left:191.5px;letter-spacing:-0.09px">30000.00000000</i><i style="left:285.3px;letter-spacing:-0.06px">-30000.00000000</i><i style="left:379.1px;letter-spacing:0.19px">a,Innadril Territory\0</i><i style="left:519.8px;letter-spacing:0.13px">-1</i><i style="left:566.7px;letter-spacing:0.13px">-1</i><i style="left:613.6px;letter-spacing:0.13px">-1</i><i style="left:660.5px;letter-spacing:0.13px">-1</i><i style="left:707.4px;letter-spacing:0.13px">-1</i><i style="left:754.3px;letter-spacing:0.13px">-1</i><i style="left:801.2px;letter-spacing:-0.09px">0.00000000</i></div>
<div class="r" style="top:142.09px"><i style="left:3.9px;letter-spacing:-0.09px">10</i><i style="left:50.8px;letter-spacing:-0.09px">10</i><i style="left:97.7px;letter-spacing:-0.09px">0</i><i style="left:144.6px;letter-spacing:-0.09px">0</i><i style="left:191.5px;letter-spacing:-0.09px">30000.00000000</i><i style="left:285.3px;letter-spacing:-0.06px">-30000.00000000</i><i style="left:379.1px;letter-spacing:-0.02px">a,Misty Mountains\0</i><i style="left:519.8px;letter-spacing:0.13px">-1</i><i style="left:566.7px;letter-spacing:0.13px">-1</i><i style="left:613.6px;letter-spacing:0.13px">-1</i><i style="left:660.5px;letter-spacing:0.13px">-1</i><i style="left:707.4px;letter-spacing:0.13px">-1</i><i style="left:754.3px;letter-spacing:0.13px">-1</i><i style="left:801.2px;letter-spacing:-0.09px">0.00000000</i></div>
<div class="r" style="top:154.78px"><i style="left:3.9px;letter-spacing:0.31px">11</i><i style="left:50.8px;letter-spacing:0.31px">11</i><i style="left:97.7px;letter-spacing:-0.09px">0</i><i style="left:144.6px;letter-spacing:-0.09px">0</i><i style="left:191.5px;letter-spacing:-0.09px">30000.00000000</i><i style="left:285.3px;letter-spacing:-0.06px">-30000.00000000</i><i style="left:379.1px;letter-spacing:-0.03px">a,The Neutral Zone\0</i><i style="left:519.8px;letter-spacing:0.13px">-1</i><i style="left:566.7px;letter-spacing:0.13px">-1</i><i style="left:613.6px;letter-spacing:0.13px">-1</i><i style="left:660.5px;letter-spacing:0.13px">-1</i><i style="left:707.4px;letter-spacing:0.13px">-1</i><i style="left:754.3px;letter-spacing:0.13px">-1</i><i style="left:801.2px;letter-spacing:-0.09px">0.00000000</i></div>
<div class="r" style="top:167.47px"><i style="left:3.9px;letter-spacing:-0.09px">12</i><i style="left:50.8px;letter-spacing:-0.09px">12</i><i style="left:97.7px;letter-spacing:-0.09px">0</i><i style="left:144.6px;letter-spacing:-0.09px">0</i><i style="left:191.5px;letter-spacing:-0.09px">30000.00000000</i><i style="left:285.3px;letter-spacing:-0.06px">-30000.00000000</i><i style="left:379.1px;letter-spacing:0.04px">a,Dragon Valley\0</i><i style="left:472.9px;letter-spacing:0.13px">-1</i><i style="left:519.8px;letter-spacing:0.13px">-1</i><i style="left:566.7px;letter-spacing:0.13px">-1</i><i style="left:613.6px;letter-spacing:0.13px">-1</i><i style="left:660.5px;letter-spacing:0.13px">-1</i><i style="left:707.4px;letter-spacing:0.13px">-1</i><i style="left:754.3px;letter-spacing:-0.09px">0.00000000</i></div>
<div class="r" style="top:180.16px"><i style="left:3.9px;letter-spacing:-0.09px">13</i><i style="left:50.8px;letter-spacing:-0.09px">13</i><i style="left:97.7px;letter-spacing:-0.09px">0</i><i style="left:144.6px;letter-spacing:-0.09px">0</i><i style="left:191.5px;letter-spacing:-0.09px">30000.00000000</i><i style="left:285.3px;letter-spacing:-0.06px">-30000.00000000</i><i style="left:379.1px;letter-spacing:0.14px">a,_Lyonn Territory\0</i><i style="left:519.8px;letter-spacing:0.13px">-1</i><i style="left:566.7px;letter-spacing:0.13px">-1</i><i style="left:613.6px;letter-spacing:0.13px">-1</i><i style="left:660.5px;letter-spacing:0.13px">-1</i><i style="left:707.4px;letter-spacing:0.13px">-1</i><i style="left:754.3px;letter-spacing:0.13px">-1</i><i style="left:801.2px;letter-spacing:-0.09px">0.00000000</i></div>
<div class="r" style="top:192.85px"><i style="left:3.9px;letter-spacing:-0.09px">14</i><i style="left:50.8px;letter-spacing:-0.09px">14</i><i style="left:97.7px;letter-spacing:-0.09px">0</i><i style="left:144.6px;letter-spacing:-0.09px">0</i><i style="left:191.5px;letter-spacing:-0.09px">30000.00000000</i><i style="left:285.3px;letter-spacing:-0.06px">-30000.00000000</i><i style="left:379.1px;letter-spacing:0.22px">a,Schuttgart Territory\0</i><i style="left:519.8px;letter-spacing:0.13px">-1</i><i style="left:566.7px;letter-spacing:0.13px">-1</i><i style="left:613.6px;letter-spacing:0.13px">-1</i><i style="left:660.5px;letter-spacing:0.13px">-1</i><i style="left:707.4px;letter-spacing:0.13px">-1</i><i style="left:754.3px;letter-spacing:0.13px">-1</i><i style="left:801.2px;letter-spacing:-0.09px">0.00000000</i></div>
<div class="r" style="top:205.54px"><i style="left:3.9px;letter-spacing:-0.09px">15</i><i style="left:50.8px;letter-spacing:-0.09px">15</i><i style="left:97.7px;letter-spacing:-0.09px">0</i><i style="left:144.6px;letter-spacing:-0.09px">0</i><i style="left:191.5px;letter-spacing:-0.09px">30000.00000000</i><i style="left:285.3px;letter-spacing:-0.06px">-30000.00000000</i><i style="left:379.1px;letter-spacing:0.10px">a,Wasteland\0</i><i style="left:472.9px;letter-spacing:0.13px">-1</i><i style="left:519.8px;letter-spacing:0.13px">-1</i><i style="left:566.7px;letter-spacing:0.13px">-1</i><i style="left:613.6px;letter-spacing:0.13px">-1</i><i style="left:660.5px;letter-spacing:0.13px">-1</i><i style="left:707.4px;letter-spacing:0.13px">-1</i><i style="left:754.3px;letter-spacing:-0.09px">0.00000000</i></div>
<div class="r" style="top:218.23px"><i style="left:3.9px;letter-spacing:-0.09px">16</i><i style="left:50.8px;letter-spacing:-0.09px">252</i><i style="left:97.7px;letter-spacing:-0.09px">18</i><i style="left:144.6px;letter-spacing:-0.09px">21</i><i style="left:191.5px;letter-spacing:-0.09px">30000.00000000</i><i style="left:285.3px;letter-spacing:-0.06px">-30000.00000000</i><i style="left:379.1px;letter-spacing:-0.10px">a,Fellmere Lake\0</i><i style="left:472.9px;letter-spacing:0.13px">-1</i><i style="left:519.8px;letter-spacing:0.13px">-1</i><i style="left:566.7px;letter-spacing:0.13px">-1</i><i style="left:613.6px;letter-spacing:0.13px">-1</i><i style="left:660.5px;letter-spacing:0.13px">-1</i><i style="left:707.4px;letter-spacing:0.13px">-1</i><i style="left:754.3px;letter-spacing:-0.09px">0.00000000</i></div>
<div class="r" style="top:230.92px"><i style="left:3.9px;letter-spacing:-0.09px">17</i><i style="left:50.8px;letter-spacing:-0.09px">254</i><i style="left:97.7px;letter-spacing:-0.09px">19</i><i style="left:144.6px;letter-spacing:-0.09px">23</i><i style="left:191.5px;letter-spacing:-0.06px">-4252.00000000</i><i style="left:285.3px;letter-spacing:-0.06px">-7520.00000000</i><i style="left:379.1px;letter-spacing:0.08px">a,The Ant Nest\0</i><i style="left:472.9px;letter-spacing:0.13px">-1</i><i style="left:519.8px;letter-spacing:0.13px">-1</i><i style="left:566.7px">-44700</i><i style="left:613.6px;letter-spacing:-0.09px">158000</i><i style="left:660.5px;letter-spacing:-0.09px">1024</i><i style="left:707.4px;letter-spacing:-0.09px">1024</i><i style="left:754.3px;letter-spacing:-0.09px">0.02000000</i></div>
<div class="r" style="top:243.61px"><i style="left:3.9px;letter-spacing:-0.09px">18</i><i style="left:50.8px;letter-spacing:-0.09px">251</i><i style="left:97.7px;letter-spacing:-0.09px">17</i><i style="left:144.6px;letter-spacing:-0.09px">22</i><i style="left:191.5px;letter-spacing:-0.09px">30000.00000000</i><i style="left:285.3px;letter-spacing:-0.06px">-30000.00000000</i><i style="left:379.1px;letter-spacing:-0.04px">a,Gludin Arena\0</i><i style="left:472.9px;letter-spacing:0.13px">-1</i><i style="left:519.8px;letter-spacing:0.13px">-1</i><i style="left:566.7px;letter-spacing:0.13px">-1</i><i style="left:613.6px;letter-spacing:0.13px">-1</i><i style="left:660.5px;letter-spacing:0.13px">-1</i><i style="left:707.4px;letter-spacing:0.13px">-1</i><i style="left:754.3px;letter-spacing:-0.09px">0.00000000</i></div>
<div class="r" style="top:256.30px"><i style="left:3.9px;letter-spacing:-0.09px">19</i><i style="left:50.8px;letter-spacing:-0.09px">254</i><i style="left:97.7px;letter-spacing:-0.09px">19</i><i style="left:144.6px;letter-spacing:-0.09px">21</i><i style="left:191.5px;letter-spacing:-0.09px">30000.00000000</i><i style="left:285.3px;letter-spacing:-0.06px">-30000.00000000</i><i style="left:379.1px;letter-spacing:-0.12px">a,Gludio Castle\0</i><i style="left:472.9px;letter-spacing:0.13px">-1</i><i style="left:519.8px;letter-spacing:0.13px">-1</i><i style="left:566.7px;letter-spacing:0.13px">-1</i><i style="left:613.6px;letter-spacing:0.13px">-1</i><i style="left:660.5px;letter-spacing:0.13px">-1</i><i style="left:707.4px;letter-spacing:0.13px">-1</i><i style="left:754.3px;letter-spacing:-0.09px">0.00000000</i></div>
<div class="r" style="top:268.99px"><i style="left:3.9px;letter-spacing:-0.09px">20</i><i style="left:50.8px;letter-spacing:-0.09px">255</i><i style="left:97.7px;letter-spacing:-0.09px">19</i><i style="left:144.6px;letter-spacing:-0.09px">21</i><i style="left:191.5px;letter-spacing:-0.09px">30000.00000000</i><i style="left:285.3px;letter-spacing:-0.06px">-30000.00000000</i><i style="left:379.1px">a,Town of Gludio\0</i><i style="left:472.9px;letter-spacing:-0.09px">756</i><i style="left:519.8px;letter-spacing:-0.09px">1932</i><i style="left:566.7px;color:#fff">-19968</i><i style="left:613.6px;letter-spacing:0.04px;color:#fff">117504</i><i style="left:660.5px;letter-spacing:-0.09px">1024</i><i style="left:707.4px;letter-spacing:-0.09px">1024</i><i style="left:754.3px;letter-spacing:-0.09px">0.05000000</i></div>
<div class="r" style="top:281.68px"><i style="left:3.9px;letter-spacing:-0.09px">21</i><i style="left:50.8px;letter-spacing:-0.09px">255</i><i style="left:97.7px;letter-spacing:-0.09px">17</i><i style="left:144.6px;letter-spacing:-0.09px">22</i><i style="left:191.5px;letter-spacing:-0.09px">30000.00000000</i><i style="left:285.3px;letter-spacing:-0.06px">-30000.00000000</i><i style="left:379.1px;letter-spacing:-0.15px">a,Gludin Village\0</i><i style="left:472.9px;letter-spacing:-0.09px">433</i><i style="left:519.8px;letter-spacing:-0.09px">2079</i><i style="left:566.7px">-89344</i><i style="left:613.6px;letter-spacing:-0.09px">145792</i><i style="left:660.5px;letter-spacing:-0.09px">1024</i><i style="left:707.4px;letter-spacing:-0.09px">1024</i><i style="left:754.3px;letter-spacing:-0.09px">0.05000000</i></div>
<div class="r" style="top:294.37px"><i style="left:3.9px;letter-spacing:-0.09px">22</i><i style="left:50.8px;letter-spacing:-0.09px">254</i><i style="left:97.7px;letter-spacing:-0.09px">17</i><i style="left:144.6px;letter-spacing:-0.09px">22</i><i style="left:191.5px;letter-spacing:-0.09px">30000.00000000</i><i style="left:285.3px;letter-spacing:-0.06px">-30000.00000000</i><i style="left:379.1px;letter-spacing:-0.09px">a,Gludin Harbor\0</i><i style="left:472.9px;letter-spacing:0.13px">-1</i><i style="left:519.8px;letter-spacing:0.13px">-1</i><i style="left:566.7px;letter-spacing:0.13px">-1</i><i style="left:613.6px;letter-spacing:0.13px">-1</i><i style="left:660.5px;letter-spacing:0.13px">-1</i><i style="left:707.4px;letter-spacing:0.13px">-1</i><i style="left:754.3px;letter-spacing:-0.09px">0.00000000</i></div>
<div class="r" style="top:307.06px"><i style="left:3.9px;letter-spacing:-0.09px">23</i><i style="left:50.8px;letter-spacing:-0.09px">255</i><i style="left:97.7px;letter-spacing:-0.09px">18</i><i style="left:144.6px;letter-spacing:-0.09px">24</i><i style="left:191.5px;letter-spacing:-0.09px">30000.00000000</i><i style="left:285.3px;letter-spacing:-0.06px">-4200.00000000</i><i style="left:379.1px;letter-spacing:-0.18px">a,Langk Lizardmen Dwellings\0</i><i style="left:566.7px;letter-spacing:0.13px">-1</i><i style="left:613.6px;letter-spacing:0.13px">-1</i><i style="left:660.5px;letter-spacing:0.13px">-1</i><i style="left:707.4px;letter-spacing:0.13px">-1</i><i style="left:754.3px;letter-spacing:0.13px">-1</i><i style="left:801.2px;letter-spacing:0.13px">-1</i><i style="left:848.1px;letter-spacing:-0.09px">0.00000000</i></div>
<div class="r" style="top:319.75px"><i style="left:3.9px;letter-spacing:-0.09px">24</i><i style="left:50.8px;letter-spacing:-0.09px">253</i><i style="left:97.7px;letter-spacing:-0.09px">18</i><i style="left:144.6px;letter-spacing:-0.09px">23</i><i style="left:191.5px;letter-spacing:-0.09px">30000.00000000</i><i style="left:285.3px;letter-spacing:-0.06px">-3700.00000000</i><i style="left:379.1px;letter-spacing:-0.17px">a,Red Rock Ridge\0</i><i style="left:472.9px;letter-spacing:0.13px">-1</i><i style="left:519.8px;letter-spacing:0.13px">-1</i><i style="left:566.7px;letter-spacing:0.13px">-1</i><i style="left:613.6px;letter-spacing:0.13px">-1</i><i style="left:660.5px;letter-spacing:0.13px">-1</i><i style="left:707.4px;letter-spacing:0.13px">-1</i><i style="left:754.3px;letter-spacing:-0.09px">0.00000000</i></div>
<div class="r" style="top:332.44px"><i style="left:3.9px;letter-spacing:-0.09px">25</i><i style="left:50.8px;letter-spacing:-0.09px">253</i><i style="left:97.7px;letter-spacing:-0.09px">19</i><i style="left:144.6px;letter-spacing:-0.09px">21</i><i style="left:191.5px;letter-spacing:-0.09px">30000.00000000</i><i style="left:285.3px;letter-spacing:-0.06px">-30000.00000000</i><i style="left:379.1px;letter-spacing:-0.18px">a,Maille Lizardmen Barracks\0</i><i style="left:519.8px;letter-spacing:0.13px">-1</i><i style="left:566.7px;letter-spacing:0.13px">-1</i><i style="left:613.6px;letter-spacing:0.13px">-1</i><i style="left:660.5px;letter-spacing:0.13px">-1</i><i style="left:707.4px;letter-spacing:0.13px">-1</i><i style="left:754.3px;letter-spacing:0.13px">-1</i><i style="left:801.2px;letter-spacing:-0.09px">0.00000000</i></div>
<div class="r" style="top:345.13px"><i style="left:3.9px;letter-spacing:-0.09px">26</i><i style="left:50.8px;letter-spacing:-0.09px">253</i><i style="left:97.7px;letter-spacing:-0.09px">17</i><i style="left:144.6px;letter-spacing:-0.09px">20</i><i style="left:191.5px;letter-spacing:-0.09px">30000.00000000</i><i style="left:285.3px;letter-spacing:-0.06px">-4200.00000000</i><i style="left:379.1px;letter-spacing:-0.07px">a,Windy Hill\0</i><i style="left:472.9px;letter-spacing:0.13px">-1</i><i style="left:519.8px;letter-spacing:0.13px">-1</i><i style="left:566.7px;letter-spacing:0.13px">-1</i><i style="left:613.6px;letter-spacing:0.13px">-1</i><i style="left:660.5px;letter-spacing:0.13px">-1</i><i style="left:707.4px;letter-spacing:0.13px">-1</i><i style="left:754.3px;letter-spacing:-0.09px">0.00000000</i></div>
<div class="r" style="top:357.82px"><i style="left:3.9px;letter-spacing:-0.09px">27</i><i style="left:50.8px;letter-spacing:-0.09px">255</i><i style="left:97.7px;letter-spacing:-0.09px">18</i><i style="left:144.6px;letter-spacing:-0.09px">21</i><i style="left:191.5px;letter-spacing:-0.09px">30000.00000000</i><i style="left:285.3px;letter-spacing:-0.06px">-30000.00000000</i><i style="left:379.1px;letter-spacing:0.06px">a,Ruins of Agony\0</i><i style="left:472.9px;letter-spacing:0.13px">-1</i><i style="left:519.8px;letter-spacing:0.13px">-1</i><i style="left:566.7px;letter-spacing:0.13px">-1</i><i style="left:613.6px;letter-spacing:0.13px">-1</i><i style="left:660.5px;letter-spacing:0.13px">-1</i><i style="left:707.4px;letter-spacing:0.13px">-1</i><i style="left:754.3px;letter-spacing:-0.09px">0.00000000</i></div>
<div class="r" style="top:370.51px"><i style="left:3.9px;letter-spacing:-0.09px">28</i><i style="left:50.8px;letter-spacing:-0.09px">254</i><i style="left:97.7px;letter-spacing:-0.09px">18</i><i style="left:144.6px;letter-spacing:-0.09px">23</i><i style="left:191.5px;letter-spacing:-0.06px">-3760.00000000</i><i style="left:285.3px;letter-spacing:-0.06px">-5632.00000000</i><i style="left:379.1px;letter-spacing:0.13px">a,Forgotten Temple\0</i><i style="left:519.8px;letter-spacing:0.13px">-1</i><i style="left:566.7px;letter-spacing:0.13px">-1</i><i style="left:613.6px;letter-spacing:0.13px">-1</i><i style="left:660.5px;letter-spacing:0.13px">-1</i><i style="left:707.4px;letter-spacing:0.13px">-1</i><i style="left:754.3px;letter-spacing:0.13px">-1</i><i style="left:801.2px;letter-spacing:-0.09px">0.00000000</i></div>
<div class="r" style="top:383.20px"><i style="left:3.9px;letter-spacing:-0.09px">29</i><i style="left:50.8px;letter-spacing:-0.09px">255</i><i style="left:97.7px;letter-spacing:-0.09px">19</i><i style="left:144.6px;letter-spacing:-0.09px">22</i><i style="left:191.5px;letter-spacing:-0.09px">30000.00000000</i><i style="left:285.3px;letter-spacing:-0.06px">-30000.00000000</i><i style="left:379.1px;letter-spacing:-0.06px">a,Ruins of Despair\0</i><i style="left:519.8px;letter-spacing:0.13px">-1</i><i style="left:566.7px;letter-spacing:0.13px">-1</i><i style="left:613.6px;letter-spacing:0.13px">-1</i><i style="left:660.5px;letter-spacing:0.13px">-1</i><i style="left:707.4px;letter-spacing:0.13px">-1</i><i style="left:754.3px;letter-spacing:0.13px">-1</i><i style="left:801.2px;letter-spacing:-0.09px">0.00000000</i></div>
<div class="r" style="top:395.89px"><i style="left:3.9px;letter-spacing:-0.09px">30</i><i style="left:50.8px;letter-spacing:-0.09px">255</i><i style="left:97.7px;letter-spacing:-0.09px">17</i><i style="left:144.6px;letter-spacing:-0.09px">21</i><i style="left:191.5px;letter-spacing:-0.09px">30000.00000000</i><i style="left:285.3px;letter-spacing:-0.06px">-30000.00000000</i><i style="left:379.1px;letter-spacing:-0.07px">a,Orc Barracks\0</i><i style="left:472.9px;letter-spacing:0.13px">-1</i><i style="left:519.8px;letter-spacing:0.13px">-1</i><i style="left:566.7px;letter-spacing:0.13px">-1</i><i style="left:613.6px;letter-spacing:0.13px">-1</i><i style="left:660.5px;letter-spacing:0.13px">-1</i><i style="left:707.4px;letter-spacing:0.13px">-1</i><i style="left:754.3px;letter-spacing:-0.09px">0.00000000</i></div>
<div class="r" style="top:408.58px"><i style="left:3.9px;letter-spacing:-0.09px">31</i><i style="left:50.8px;letter-spacing:-0.09px">255</i><i style="left:97.7px;letter-spacing:-0.09px">18</i><i style="left:144.6px;letter-spacing:-0.09px">22</i><i style="left:191.5px;letter-spacing:-0.09px">30000.00000000</i><i style="left:285.3px;letter-spacing:-0.06px">-30000.00000000</i><i style="left:379.1px;letter-spacing:-0.03px">a,Abandoned Camp\0</i><i style="left:519.8px;letter-spacing:0.13px">-1</i><i style="left:566.7px;letter-spacing:0.13px">-1</i><i style="left:613.6px;letter-spacing:0.13px">-1</i><i style="left:660.5px;letter-spacing:0.13px">-1</i><i style="left:707.4px;letter-spacing:0.13px">-1</i><i style="left:754.3px;letter-spacing:0.13px">-1</i><i style="left:801.2px;letter-spacing:-0.09px">0.00000000</i></div>
<div class="r" style="top:421.27px"><i style="left:3.9px;letter-spacing:-0.09px">32</i><i style="left:50.8px;letter-spacing:-0.09px">255</i><i style="left:97.7px;letter-spacing:-0.09px">21</i><i style="left:144.6px;letter-spacing:-0.09px">25</i><i style="left:191.5px;letter-spacing:-0.06px">-4874.00000000</i><i style="left:285.3px;letter-spacing:-0.06px">-6874.00000000</i><i style="left:379.1px;letter-spacing:-0.11px">a,Elven Ruins\0</i><i style="left:472.9px;letter-spacing:-0.09px">270</i><i style="left:519.8px;letter-spacing:-0.09px">2485</i><i style="left:566.7px;letter-spacing:-0.09px">34830</i><i style="left:613.6px;letter-spacing:-0.09px">235950</i><i style="left:660.5px;letter-spacing:-0.09px">1024</i><i style="left:707.4px;letter-spacing:-0.09px">1024</i><i style="left:754.3px;letter-spacing:-0.09px">0.05000000</i></div>
<div class="r" style="top:433.96px"><i style="left:3.9px;letter-spacing:-0.09px">33</i><i style="left:50.8px;letter-spacing:-0.09px">255</i><i style="left:97.7px;letter-spacing:-0.09px">16</i><i style="left:144.6px;letter-spacing:-0.09px">25</i><i style="left:191.5px;letter-spacing:-0.09px">30000.00000000</i><i style="left:285.3px;letter-spacing:-0.06px">-30000.00000000</i><i style="left:379.1px;letter-spacing:-0.11px">a,Elven Ruins\0</i><i style="left:472.9px;letter-spacing:0.13px">-1</i><i style="left:519.8px;letter-spacing:0.13px">-1</i><i style="left:566.7px;letter-spacing:0.13px">-1</i><i style="left:613.6px;letter-spacing:0.13px">-1</i><i style="left:660.5px;letter-spacing:0.13px">-1</i><i style="left:707.4px;letter-spacing:0.13px">-1</i><i style="left:754.3px;letter-spacing:-0.09px">0.00000000</i></div>
<div class="r" style="top:446.65px"><i style="left:3.9px;letter-spacing:-0.09px">34</i><i style="left:50.8px;letter-spacing:-0.09px">255</i><i style="left:97.7px;letter-spacing:-0.09px">21</i><i style="left:144.6px;letter-spacing:-0.09px">25</i><i style="left:191.5px;letter-spacing:-0.09px">30000.00000000</i><i style="left:285.3px;letter-spacing:-0.06px">-6873.00000000</i><i style="left:379.1px;letter-spacing:0.12px">a,Neutral Waterways\0</i><i style="left:519.8px;letter-spacing:0.13px">-1</i><i style="left:566.7px;letter-spacing:0.13px">-1</i><i style="left:613.6px;letter-spacing:0.13px">-1</i><i style="left:660.5px;letter-spacing:0.13px">-1</i><i style="left:707.4px;letter-spacing:0.13px">-1</i><i style="left:754.3px;letter-spacing:0.13px">-1</i><i style="left:801.2px;letter-spacing:-0.09px">0.00000000</i></div>
<div class="r" style="top:459.34px"><i style="left:3.9px;letter-spacing:-0.09px">35</i><i style="left:50.8px;letter-spacing:-0.09px">255</i><i style="left:97.7px;letter-spacing:-0.09px">17</i><i style="left:144.6px;letter-spacing:-0.09px">25</i><i style="left:191.5px;letter-spacing:-0.09px">30000.00000000</i><i style="left:285.3px;letter-spacing:-0.06px">-30000.00000000</i><i style="left:379.1px;letter-spacing:-0.05px">a,Talking Island Village\0</i><i style="left:519.8px;letter-spacing:-0.09px">406</i><i style="left:566.7px;letter-spacing:-0.09px">2536</i><i style="left:613.6px">-90624</i><i style="left:660.5px;letter-spacing:-0.09px">236416</i><i style="left:707.4px;letter-spacing:-0.09px">1024</i><i style="left:754.3px;letter-spacing:-0.09px">1024</i><i style="left:801.2px;letter-spacing:-0.09px">0.05000000</i></div>
<div class="r" style="top:472.03px"><i style="left:3.9px;letter-spacing:-0.09px">36</i><i style="left:50.8px;letter-spacing:-0.09px">253</i><i style="left:97.7px;letter-spacing:-0.09px">17</i><i style="left:144.6px;letter-spacing:-0.09px">25</i><i style="left:191.5px;letter-spacing:-0.09px">30000.00000000</i><i style="left:285.3px;letter-spacing:-0.06px">-30000.00000000</i><i style="left:379.1px;letter-spacing:-0.13px">a,Cedric&#x27;s Training Hall\0</i><i style="left:519.8px;letter-spacing:0.13px">-1</i><i style="left:566.7px;letter-spacing:0.13px">-1</i><i style="left:613.6px;letter-spacing:0.13px">-1</i><i style="left:660.5px;letter-spacing:0.13px">-1</i><i style="left:707.4px;letter-spacing:0.13px">-1</i><i style="left:754.3px;letter-spacing:0.13px">-1</i><i style="left:801.2px;letter-spacing:-0.09px">0.00000000</i></div>
<div class="r" style="top:484.72px"><i style="left:3.9px;letter-spacing:-0.09px">37</i><i style="left:50.8px;letter-spacing:-0.09px">254</i><i style="left:97.7px;letter-spacing:-0.09px">17</i><i style="left:144.6px;letter-spacing:-0.09px">25</i><i style="left:191.5px;letter-spacing:-0.09px">30000.00000000</i><i style="left:285.3px;letter-spacing:-0.06px">-30000.00000000</i><i style="left:379.1px;letter-spacing:-0.11px">a,Einhovant&#x27;s School of Magic\0</i><i style="left:566.7px;letter-spacing:0.13px">-1</i><i style="left:613.6px;letter-spacing:0.13px">-1</i><i style="left:660.5px;letter-spacing:0.13px">-1</i><i style="left:707.4px;letter-spacing:0.13px">-1</i><i style="left:754.3px;letter-spacing:0.13px">-1</i><i style="left:801.2px;letter-spacing:0.13px">-1</i><i style="left:848.1px;letter-spacing:-0.09px">0.00000000</i></div>
<div class="r" style="top:497.41px"><i style="left:3.9px;letter-spacing:-0.09px">38</i><i style="left:50.8px;letter-spacing:-0.09px">253</i><i style="left:97.7px;letter-spacing:-0.09px">16</i><i style="left:144.6px;letter-spacing:-0.09px">25</i><i style="left:191.5px;letter-spacing:-0.09px">30000.00000000</i><i style="left:285.3px;letter-spacing:-0.06px">-30000.00000000</i><i style="left:379.1px;letter-spacing:0.03px">a,Obelisk of Victory\0</i><i style="left:519.8px;letter-spacing:0.13px">-1</i><i style="left:566.7px;letter-spacing:0.13px">-1</i><i style="left:613.6px;letter-spacing:0.13px">-1</i><i style="left:660.5px;letter-spacing:0.13px">-1</i><i style="left:707.4px;letter-spacing:0.13px">-1</i><i style="left:754.3px;letter-spacing:0.13px">-1</i><i style="left:801.2px;letter-spacing:-0.09px">0.00000000</i></div>
<div class="r" style="top:510.10px"><i style="left:3.9px;letter-spacing:-0.09px">39</i><i style="left:50.8px;letter-spacing:-0.09px">254</i><i style="left:97.7px;letter-spacing:-0.09px">16</i><i style="left:144.6px;letter-spacing:-0.09px">25</i><i style="left:191.5px;letter-spacing:-0.09px">30000.00000000</i><i style="left:285.3px;letter-spacing:-0.06px">-30000.00000000</i><i style="left:379.1px">a,Singing Waterfall\0</i><i style="left:519.8px;letter-spacing:0.13px">-1</i><i style="left:566.7px;letter-spacing:0.13px">-1</i><i style="left:613.6px;letter-spacing:0.13px">-1</i><i style="left:660.5px;letter-spacing:0.13px">-1</i><i style="left:707.4px;letter-spacing:0.13px">-1</i><i style="left:754.3px;letter-spacing:0.13px">-1</i><i style="left:801.2px;letter-spacing:-0.09px">0.00000000</i></div>
<div class="r" style="top:522.79px"><i style="left:3.9px;letter-spacing:-0.09px">40</i><i style="left:50.8px;letter-spacing:-0.09px">252</i><i style="left:97.7px;letter-spacing:-0.09px">17</i><i style="left:144.6px;letter-spacing:-0.09px">25</i><i style="left:191.5px;letter-spacing:-0.09px">30000.00000000</i><i style="left:285.3px;letter-spacing:-0.06px">-30000.00000000</i><i style="left:379.1px">a,Talking Island Harbor\0</i><i style="left:519.8px;letter-spacing:0.13px">-1</i><i style="left:566.7px;letter-spacing:0.13px">-1</i><i style="left:613.6px;letter-spacing:0.13px">-1</i><i style="left:660.5px;letter-spacing:0.13px">-1</i><i style="left:707.4px;letter-spacing:0.13px">-1</i><i style="left:754.3px;letter-spacing:0.13px">-1</i><i style="left:801.2px;letter-spacing:-0.09px">0.00000000</i></div>
<div class="r" style="top:535.48px"><i style="left:3.9px;letter-spacing:-0.09px">41</i><i style="left:50.8px;letter-spacing:-0.09px">253</i><i style="left:97.7px;letter-spacing:-0.09px">22</i><i style="left:144.6px;letter-spacing:-0.09px">22</i><i style="left:191.5px;letter-spacing:-0.09px">30000.00000000</i><i style="left:285.3px;letter-spacing:-0.06px">-30000.00000000</i><i style="left:379.1px;letter-spacing:-0.03px">a,Singing Arena\0</i><i style="left:472.9px;letter-spacing:0.13px">-1</i><i style="left:519.8px;letter-spacing:0.13px">-1</i><i style="left:566.7px;letter-spacing:0.13px">-1</i><i style="left:613.6px;letter-spacing:0.13px">-1</i><i style="left:660.5px;letter-spacing:0.13px">-1</i><i style="left:707.4px;letter-spacing:0.13px">-1</i><i style="left:754.3px;letter-spacing:-0.09px">0.00000000</i></div>
</div>
<svg style="left:690px;top:300px;width:140px;height:110px" viewBox="0 0 140 110"><ellipse cx="66.800" cy="55.600" rx="56.400" ry="37" fill="none" stroke="#f0283c" stroke-width="1.100"/></svg>
<div class="sb" style="left:980.400px;top:74.300px;width:15.900px;height:556.700px"></div>
<div class="th" style="left:980.400px;top:92px;width:15.900px;height:42.200px"></div>
<svg class="ar" viewBox="0 0 8 8" style="left:983.8px;top:79.3px"><path d="M.7 6l3.300-3.400 3.300 3.400" fill="none" stroke="#505050" stroke-width="1.500"/></svg>
<svg class="ar" viewBox="0 0 8 8" style="left:983.8px;top:603.0px"><path d="M.7 2l3.300 3.400 3.300-3.400" fill="none" stroke="#505050" stroke-width="1.500"/></svg>
<div class="sb" style="left:151.700px;top:615.800px;width:844.600px;height:15.200px"></div>
<div class="th" style="left:168.800px;top:615.800px;width:544.200px;height:15.200px"></div>
<svg class="ar" viewBox="0 0 8 8" style="left:155.6px;top:619.3px"><path d="M6 .7l-3.400 3.300 3.400 3.300" fill="none" stroke="#505050" stroke-width="1.500"/></svg>
<svg class="ar" viewBox="0 0 8 8" style="left:967.6px;top:619.3px"><path d="M2 .7l3.400 3.300-3.400 3.300" fill="none" stroke="#505050" stroke-width="1.500"/></svg>
<div style="left:140.600px;top:634.300px;width:860px;height:7.500px;background:#f0f0f0"></div>
<div class="hd" style="left:436px;top:635.200px;width:278.800px;height:6.600px;border-bottom:0"></div>
<svg style="left:439px;top:636.200px;width:272px;height:4.500px" viewBox="0 0 272 4.500"><path d="M.8 4.200h6l-3-3.600zM264.400 4.200h6l-3-3.600z" fill="#1e82f0"/><path d="M13 2.700h248" stroke="#5aa5f5" stroke-width="1.500" stroke-dasharray="1.900 1.030"/></svg>
<div id="log"></div>
<div class="sb" style="left:981.500px;top:644.600px;width:15.100px;height:54.200px"></div>
<div class="th" style="left:981.500px;top:666px;width:15.100px;height:16px"></div>
<svg class="ar" viewBox="0 0 8 8" style="left:984.5px;top:649.5px"><path d="M.7 6l3.300-3.400 3.300 3.400" fill="none" stroke="#505050" stroke-width="1.500"/></svg>
<svg class="ar" viewBox="0 0 8 8" style="left:984.5px;top:686.8px"><path d="M.7 2l3.300 3.400 3.300-3.400" fill="none" stroke="#505050" stroke-width="1.500"/></svg>
<div id="lt"><i style="left:0;top:0;letter-spacing:0.43px">|-->--------------------</i><i style="left:0;top:12.7px">|</i><i style="left:11.2px;top:12.7px;letter-spacing:0.11px">Открытие файла: ZoneName-e.txt</i><i style="left:0;top:25.4px;letter-spacing:1.56px">===========================================</i></div>
<div id="bot"></div>
<svg style="left:0;top:0;width:1000px;height:703px" viewBox="0 0 1000 703"><rect x="151.050" y="73.750" width="846.600" height="559.450" fill="none" stroke="#2a88e2" stroke-width="1.500"/><rect x="150.400" y="642.500" width="847.800" height="58" fill="none" stroke="#8e8e8e" stroke-width="1.500"/></svg>
</body></html>
